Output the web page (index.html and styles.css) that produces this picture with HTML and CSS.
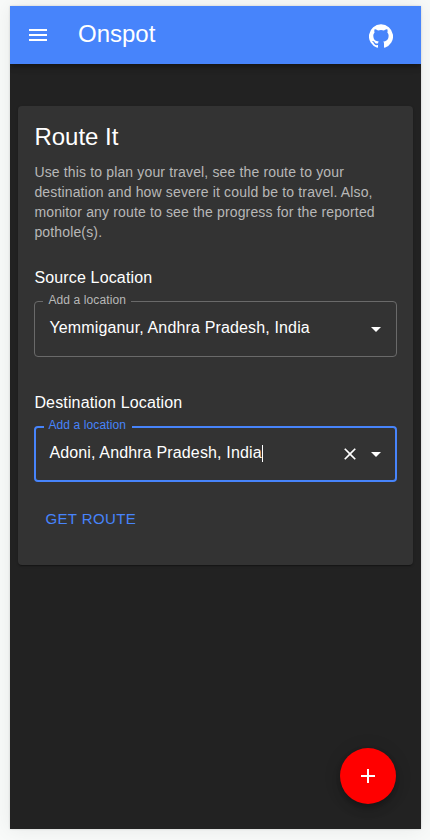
FILE: index.html
```html
<!DOCTYPE html>
<html lang="en">
<head>
<meta charset="utf-8">
<title>Onspot</title>
<link rel="stylesheet" href="styles.css">
</head>
<body>
<div class="app">
  <header class="appbar">
    <svg class="icon menu" viewBox="0 0 24 24"><path d="M3 18h18v-2H3v2zm0-5h18v-2H3v2zm0-7v2h18V6H3z"/></svg>
    <div class="brand">Onspot</div>
    <svg class="icon github" viewBox="0 0 24 24"><path d="M12 .3a12 12 0 0 0-3.8 23.4c.6.1.8-.3.8-.6v-2c-3.3.7-4-1.6-4-1.6-.6-1.4-1.4-1.8-1.4-1.8-1-.7.1-.7.1-.7 1.2 0 1.9 1.2 1.9 1.2 1 1.8 2.8 1.3 3.5 1 0-.8.4-1.3.7-1.6-2.7-.3-5.5-1.3-5.5-6 0-1.2.5-2.3 1.3-3.1-.2-.4-.6-1.6 0-3.2 0 0 1-.3 3.4 1.2a11.5 11.5 0 0 1 6 0c2.3-1.5 3.3-1.2 3.3-1.2.6 1.6.2 2.8 0 3.2.9.8 1.3 1.9 1.3 3.2 0 4.6-2.8 5.6-5.5 5.9.5.4.9 1 .9 2.2v3.3c0 .3.1.7.8.6A12 12 0 0 0 12 .3"/></svg>
  </header>
  <main class="card">
    <h1>Route It</h1>
    <p class="intro">Use this to plan your travel, see the route to your destination and how severe it could be to travel. Also, monitor any route to see the progress for the reported pothole(s).</p>
    <h2>Source Location</h2>
    <div class="field">
      <span class="label">Add a location</span>
      <span class="value">Yemmiganur, Andhra Pradesh, India</span>
      <svg class="icon arrow" viewBox="0 0 24 24"><path d="M7 10l5 5 5-5z"/></svg>
    </div>
    <h2>Destination Location</h2>
    <div class="field focused">
      <span class="label">Add a location</span>
      <span class="value">Adoni, Andhra Pradesh, India</span>
      <span class="caret"></span>
      <svg class="icon clear" viewBox="0 0 24 24"><path d="M19 6.41L17.59 5 12 10.59 6.41 5 5 6.41 10.59 12 5 17.59 6.41 19 12 13.41 17.59 19 19 17.59 13.41 12z"/></svg>
      <svg class="icon arrow" viewBox="0 0 24 24"><path d="M7 10l5 5 5-5z"/></svg>
    </div>
    <div class="action">GET ROUTE</div>
  </main>
  <div class="fab"><svg class="icon" viewBox="0 0 24 24"><path d="M19 13h-6v6h-2v-6H5v-2h6V5h2v6h6v2z"/></svg></div>
</div>
</body>
</html>
```
FILE: styles.css
```css
* { box-sizing: border-box; }

body {
  margin: 0;
  height: 840px;
  padding: 6px 9px 11px 10px;
  overflow: hidden;
  background: #f8faf9;
  color: #fff;
  font-family: "Liberation Sans", Arial, sans-serif;
}

.app {
  display: flex;
  flex-direction: column;
  height: 823px;
  background: #222;
  box-shadow: 0 0 2px rgba(0, 0, 0, .16), 0 0 20px rgba(0, 0, 0, .07);
}

.icon {
  display: block;
  flex: none;
  width: 24px;
  height: 24px;
  fill: #fff;
}

.appbar {
  display: flex;
  align-items: center;
  height: 58px;
  padding: 0 28px 0 16px;
  background: #4784fb;
  box-shadow: 0 2px 4px -1px rgba(0, 0, 0, .2), 0 4px 5px rgba(0, 0, 0, .14), 0 1px 10px rgba(0, 0, 0, .12);
  clip-path: inset(0 0 -16px 0);
}

.brand {
  flex: 1;
  margin-left: 28px;
  font-size: 24px;
  line-height: 32px;
  padding-bottom: 2px;
}

.github { margin-top: 1px; }

.card {
  height: 459px;
  margin: 42px 8px 0;
  padding: 15px 16px;
  border-radius: 4px;
  background: #333;
  box-shadow: 0 2px 1px -1px rgba(0, 0, 0, .2), 0 1px 1px rgba(0, 0, 0, .14), 0 1px 3px rgba(0, 0, 0, .12);
}

h1 {
  margin: 0 0 9px;
  padding-left: .4px;
  font-size: 24px;
  font-weight: 400;
  line-height: 32px;
}

.intro {
  margin: 0 0 24px;
  padding-left: .4px;
  color: #b8b8b8;
  font-size: 14px;
  line-height: 20px;
  letter-spacing: .01071em;
}

h2 {
  margin: 0 0 11px;
  padding-left: .4px;
  font-size: 16px;
  font-weight: 400;
  line-height: 24px;
  letter-spacing: .00938em;
}

.field {
  position: relative;
  display: flex;
  align-items: center;
  height: 56px;
  margin-bottom: 34px;
  padding: 0 8px 0 14.4px;
  border: 1px solid #6a6a6a;
  border-radius: 4px;
}

.focused {
  padding: 0 7px 0 13.4px;
  border: 2px solid #4784fb;
}

.label {
  position: absolute;
  top: -10px;
  left: 8px;
  height: 16px;
  width: 88px;
  padding-left: 5.4px;
  background: #333;
  color: #b8b8b8;
  font-size: 12px;
  line-height: 16px;
  letter-spacing: .00938em;
  white-space: nowrap;
}

.focused .label {
  top: -11px;
  padding-left: 4.4px;
  color: #4784fb;
}

.value {
  font-size: 16px;
  line-height: 20px;
  letter-spacing: .00938em;
  padding-bottom: 2px;
  white-space: nowrap;
}

.caret {
  width: 1px;
  height: 17px;
  margin-bottom: 2px;
  background: #fff;
}

.arrow { margin-left: auto; }

.clear {
  width: 20px;
  height: 20px;
  margin-left: auto;
}

.clear + .arrow { margin-left: 4px; }

.action {
  margin-left: 11.4px;
  color: #4784fb;
  font-size: 15px;
  line-height: 26px;
  letter-spacing: .4px;
  margin-top: -10px;
}

.fab {
  display: grid;
  place-items: center;
  width: 56px;
  height: 56px;
  margin: auto 25px 25px auto;
  border-radius: 50%;
  background: #f00;
  box-shadow: 0 3px 5px -1px rgba(0, 0, 0, .2), 0 6px 10px rgba(0, 0, 0, .14), 0 1px 18px rgba(0, 0, 0, .12);
}
```
